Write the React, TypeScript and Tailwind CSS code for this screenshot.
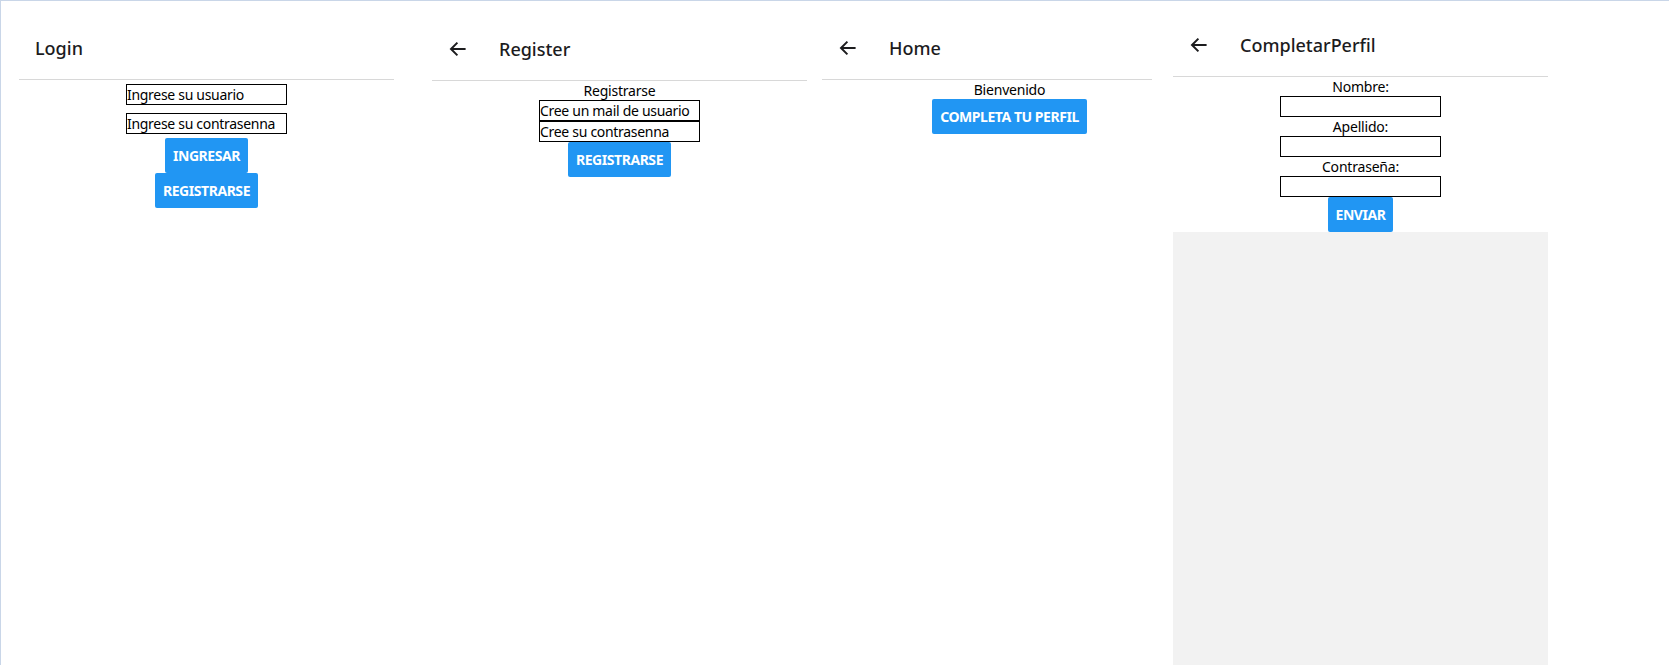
import React from "react";

const FONT = "font-['Segoe_UI','Noto_Sans','Open_Sans',sans-serif]";

const Arrow = () => (
  <svg width="24" height="24" viewBox="0 0 24 24" className="shrink-0">
    <path
      d="M19.6 12H5.2M11.4 5.6L5 12l6.4 6.4"
      fill="none"
      stroke="#1c1c1e"
      strokeWidth="2"
      strokeLinecap="butt"
      strokeLinejoin="miter"
    />
  </svg>
);

const Header = ({ title, back, w = "w-[375px]" }: { title: string; back?: boolean; w?: string }) => (
  <div className={`${w} h-[64px] shrink-0 flex items-center bg-white border-b border-[#d8d8d8]`}>
    {back ? (
      <>
        <div className="ml-[14px]">
          <Arrow />
        </div>
        <span className="ml-[29px] text-[18px] leading-[24px] font-medium text-[#1c1c1e]">{title}</span>
      </>
    ) : (
      <span className="ml-[16px] text-[18px] leading-[24px] font-medium text-[#1c1c1e]">{title}</span>
    )}
  </div>
);

const Btn = ({ children }: { children: React.ReactNode }) => (
  <div className="bg-[#2196f3] rounded-[2px] px-2 py-2 text-white text-[14px] leading-[19px] font-bold tracking-[-0.45px] uppercase">
    {children}
  </div>
);

const Field = ({ value, className = "" }: { value?: string; className?: string }) => (
  <input
    readOnly
    defaultValue={value}
    className={`w-[161px] h-[21px] border border-black bg-white text-black text-[14px] leading-[19px] tracking-[-0.3px] px-0 outline-none ${FONT} ${className}`}
  />
);

export default function App() {
  return (
    <div className={`w-[1669px] h-[665px] bg-white border-t border-l border-[#c9d6e8] flex items-start overflow-hidden text-black text-[14px] leading-[19px] ${FONT}`}>
      {/* Login */}
      <div className="ml-[18px] mt-[15px] w-[375px] shrink-0 flex flex-col">
        <Header title="Login" />
        <div className="flex flex-col items-center">
          <Field value="Ingrese su usuario" className="my-[4px]" />
          <Field value="Ingrese su contrasenna" className="my-[4px]" />
          <Btn>Ingresar</Btn>
          <Btn>Registrarse</Btn>
        </div>
      </div>

      {/* Register */}
      <div className="ml-[38px] mt-[16px] w-[375px] shrink-0 flex flex-col">
        <Header title="Register" back />
        <div className="flex flex-col items-center">
          <span className="tracking-[-0.2px]">Registrarse</span>
          <Field value="Cree un mail de usuario" />
          <Field value="Cree su contrasenna" />
          <Btn>Registrarse</Btn>
        </div>
      </div>

      {/* Home */}
      <div className="ml-[15px] mt-[15px] w-[351px] shrink-0 flex flex-col">
        <Header title="Home" back w="w-[330px]" />
        <div className="w-[375px] flex flex-col items-center">
          <span className="tracking-[-0.2px]">Bienvenido</span>
          <Btn>Completa tu perfil</Btn>
        </div>
      </div>

      {/* CompletarPerfil */}
      <div className="mt-[12px] w-[375px] h-[653px] shrink-0 flex flex-col bg-[#f2f2f2]">
        <Header title="CompletarPerfil" back />
        <div className="flex flex-col items-center bg-white tracking-[-0.2px]">
          <span>Nombre:</span>
          <Field />
          <span>Apellido:</span>
          <Field />
          <span>Contraseña:</span>
          <Field />
          <Btn>Enviar</Btn>
        </div>
        <div className="flex-1 bg-[#f2f2f2]" />
      </div>
    </div>
  );
}
